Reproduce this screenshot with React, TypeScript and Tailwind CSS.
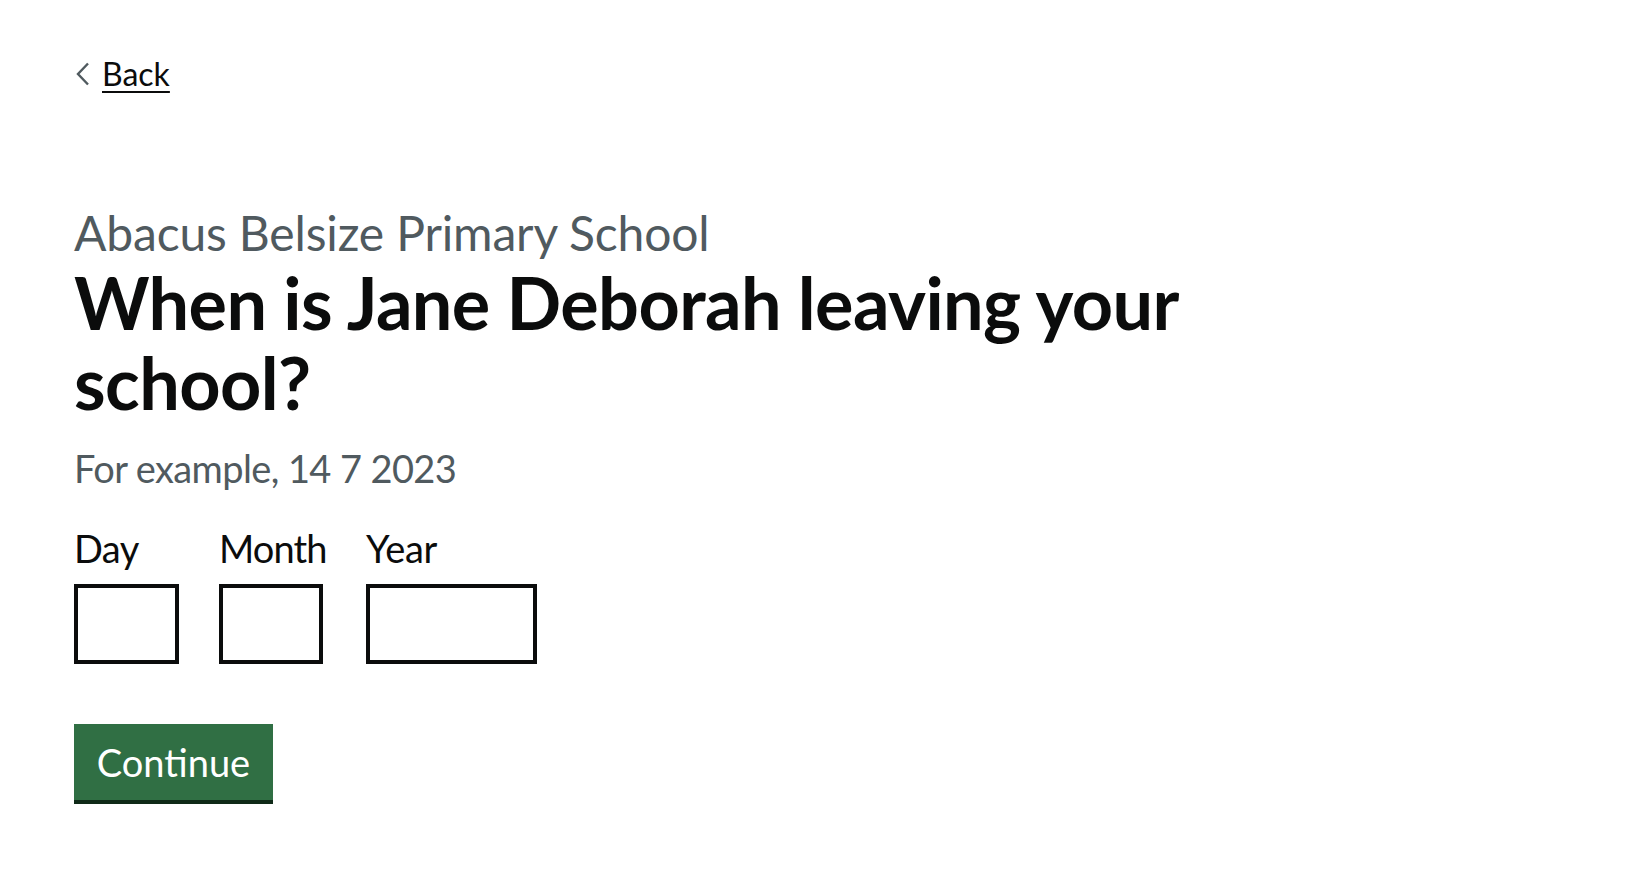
import React from "react";

export default function App() {
  return (
    <div className="min-h-[870px] w-full bg-white font-[family-name:Lato,'Liberation_Sans',sans-serif] text-[#0b0c0c]">
      <div className="pl-[74px] pt-[54px]">
        <a
          href="#"
          className="inline-flex items-center text-[32px] leading-[40px] text-[#0b0c0c] underline decoration-[2px] underline-offset-[5px]"
        >
          <svg width="14" height="24" viewBox="0 0 14 24" className="mr-[12px] ml-[2px] no-underline" aria-hidden="true">
            <polyline points="12,1.5 2,12 12,22.5" fill="none" stroke="#505a5f" strokeWidth="2.4" />
          </svg>
          Back
        </a>

        <div className="mt-[114px] max-w-[1200px]">
          <span className="block text-[48px] leading-[50px] tracking-[-0.15px] text-[#505a5f]">
            Abacus Belsize Primary School
          </span>
          <h1 className="mt-[4px] text-[72px] font-bold leading-[80px] tracking-[-0.6px]">
            When is Jane Deborah leaving your school?
          </h1>
        </div>

        <div className="mt-[21px] text-[38px] leading-[50px] tracking-[-0.6px] text-[#505a5f]">
          For example, 14 7 2023
        </div>

        <div className="mt-[30px] flex items-start">
          <div className="mr-[40px] flex w-[105px] flex-col">
            <label className="whitespace-nowrap text-[38px] leading-[50px] tracking-[-0.6px]">Day</label>
            <input className="mt-[11px] h-[80px] w-[105px] border-[4px] border-[#0b0c0c] bg-white" />
          </div>
          <div className="mr-[43px] flex w-[104px] flex-col">
            <label className="whitespace-nowrap text-[38px] leading-[50px] tracking-[-0.9px]">Month</label>
            <input className="mt-[11px] h-[80px] w-[104px] border-[4px] border-[#0b0c0c] bg-white" />
          </div>
          <div className="flex w-[171px] flex-col">
            <label className="whitespace-nowrap text-[38px] leading-[50px] tracking-[-0.3px]">Year</label>
            <input className="mt-[11px] h-[80px] w-[171px] border-[4px] border-[#0b0c0c] bg-white" />
          </div>
        </div>

        <button className="mt-[60px] flex h-[76px] w-[199px] justify-center bg-[#306f44] pt-[19px] text-[38px] leading-[38px] text-white shadow-[0_4px_0_#0f2a18]">
          Continue
        </button>
      </div>
    </div>
  );
}
